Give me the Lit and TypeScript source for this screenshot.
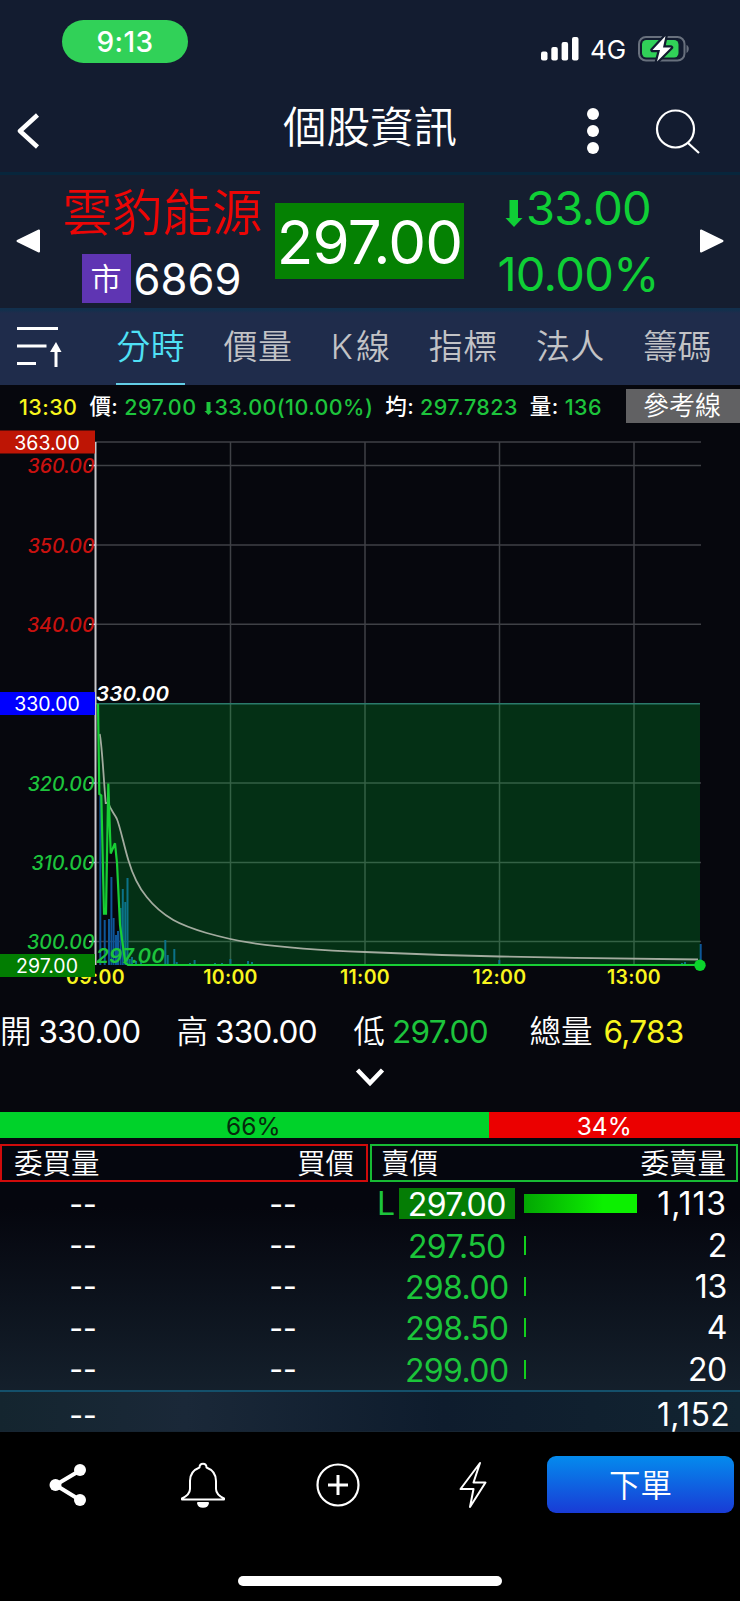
import { LitElement, html, css, svg } from "lit";
import { customElement } from "lit/decorators.js";

const CJK = css`Inter, "Noto Sans CJK TC", sans-serif`;

@customElement("price-chart")
class PriceChart extends LitElement {
  static styles = css`
    :host { display: block; height: 575px; }
    svg { display: block; font-family: ${CJK}; }
    .grid { stroke: #3f4146; stroke-width: 1.5; }
    .box { font-size: 19.5px; font-weight: 380; fill: #fff; letter-spacing: 0; text-anchor: middle; }
    .tick { font-size: 19.5px; font-style: italic; font-weight: 550; text-anchor: end; letter-spacing: 0; }
    .up { fill: #c9110f; }
    .down { fill: #1dc43c; }
    .flag { font-size: 20.5px; font-style: italic; font-weight: 600; letter-spacing: .2px; }
    .time { font-size: 19.5px; font-weight: 600; fill: #f8f51d; text-anchor: middle; letter-spacing: .3px; }
    .vol { stroke: #0e5698; stroke-width: 2; }
  `;
  render() {
    const levels: [number, number][] = [[360, 465.5], [350, 545], [340, 624.3], [320, 783], [310, 862.5], [300, 941.5]];
    const hours: [string, number][] = [["09:00", 95.5], ["10:00", 230.5], ["11:00", 365], ["12:00", 499.5], ["13:00", 634]];
    const vols: [number, number][] = [[100.3, 796], [104.7, 920], [109, 919], [111.4, 877], [113.6, 918], [116, 935], [118, 931], [120.6, 908], [122.8, 889], [125.3, 902], [127.5, 878], [129.7, 959], [132, 957], [136, 961], [141, 961], [165.3, 940], [167.7, 955], [174.3, 949], [176.7, 962], [190, 963], [194.6, 960], [215, 963], [222, 963], [230.4, 959], [248, 961], [252, 962], [499.3, 960], [682, 963], [685, 962], [700.7, 944]];
    const price = "98,704 99.3,794 101.3,795.5 104,913.7 106,913.7 108.3,783.6 110.7,853.5 115,843.3 117,863 120,925 125.3,963 128,965 700,965";
    return html`<svg width="740" height="575" viewBox="0 425 740 575">
      <g class="grid">
        <path d="M95 442H701" />
        ${levels.map(([, y]) => svg`<path d="M95 ${y}H701"/>`)}
        ${hours.slice(1).map(([, x]) => svg`<path d="M${x} 442V965"/>`)}
      </g>
      <g class="vol">${vols.map(([x, y]) => svg`<path d="M${x} ${y}V965"/>`)}</g>
      <polygon points="98,703.7 ${price} 700,703.7" fill="#00ff40" fill-opacity=".17" />
      <path d="M95 703.7H700" stroke="#2b7a6b" stroke-width="1.5" />
      <path d="M95.5 442V965" stroke="#c8c8cc" stroke-width="2" />
      <path d="M99.7 734 C102 745 103 770 105.7 803 L108.3 803 C110.500 810 114 813 116.700 818.500 C120 826 124 846 128.300 860 C133 876 140 889 146.700 897 C153 905 163 914 173.300 920 C183 925.500 195 929.500 206.700 933 C221 937 235 940.500 250 942.700 C285 948 325 950.500 365 952 C410 954 455 955.500 500 956.500 C565 958 640 958.700 698 959.500" fill="none" stroke="#a3ab9f" stroke-width="1.8" />
      <polyline points=${price} fill="none" stroke="#18cf35" stroke-width="2.2" />
      <circle cx="700" cy="965.3" r="5.7" fill="#0bd42c" />
      ${levels.map(([v, y]) => svg`<path d="M89 ${y}h6" stroke="#ddd" stroke-width="1.5"/><text class="tick ${v > 330 ? "up" : "down"}" x="94.5" y=${y + 7.5}>${v.toFixed(2)}</text>`)}
      <text class="flag" x="96" y="701" fill="#fff">330.00</text>
      <text class="tick flag down" x="165" y="963">297.00</text>
      ${hours.map(([t, x]) => svg`<text class="time" x=${x} y="984.2">${t}</text>`)}
      <rect y="430.500" width="95" height="23" fill="#be1505" />
      <rect y="692" width="95" height="23" fill="#0000fe" />
      <rect y="954" width="95" height="23" fill="#027d02" />
      <text class="box" x="47" y="449.500">363.00</text>
      <text class="box" x="47" y="711">330.00</text>
      <text class="box" x="47" y="973">297.00</text>
    </svg>`;
  }
}

@customElement("order-book")
class OrderBook extends LitElement {
  static styles = css`
    :host { display: block; color: #fff; font-family: ${CJK}; font-weight: 380; }
    .ratio { display: flex; height: 26px; line-height: 29px; font-size: 24.5px; text-align: center; margin-bottom: 6px; }
    .b { width: 488.500px; background: #00d22a; color: #062a0c; box-sizing: border-box; padding-left: 18px; }
    .s { flex: 1; background: #eb0000; box-sizing: border-box; padding-right: 20px; }
    .heads { display: flex; gap: 2px; height: 38px; font-size: 28.5px; font-weight: 350; line-height: 36px; }
    .head { width: 368px; box-sizing: border-box; border: 2px solid #d00b0b; padding: 0 12px; display: flex; justify-content: space-between; }
    .head.g { border-color: #17b934; padding: 0 10px 0 9px; }
    .rows { padding-top: 1px; height: 208px; box-sizing: border-box; }
    .row { display: grid; grid-template-columns: 166px 232.500px 116.500px 9px minmax(0, 1fr) 110px; height: 41.4px; align-items: center; font-size: 32px; line-height: 40px; }
    .row > * { min-width: 0; }
    .dash { text-align: center; font-size: 30px; font-weight: 400; }
    .second { display: flex; align-items: center; }
    .second .dash { width: 234px; flex: none; }
    .low { color: #1dc43c; width: 20px; margin-left: -23px; flex: none; }
    .price { text-align: center; color: #1bc53a; height: 31px; line-height: 33px; letter-spacing: -.6px; }
    .price.hit { background: #057d05; color: #fff; }
    .bar { height: 19px; background: #12d01c; }
    .bar.big { background: linear-gradient(90deg, #03a603, #0cf000 70%); }
    .qty { text-align: right; padding-right: 13px; padding-top: 1px; letter-spacing: -.3px; }
    .long { letter-spacing: .9px; }
    .total { border-top: 2px solid #14506b; display: flex; justify-content: space-between; height: 41px; box-sizing: border-box; font-size: 32px; line-height: 46px; background: linear-gradient(90deg, #14252f, #1a2838 25%, #0e1c2d 60%, #122431); }
    .total .dash { width: 166px; }
    .total .qty { padding-top: 0; padding-right: 10px; letter-spacing: .3px; }
  `;
  render() {
    const asks: [string, string, number][] = [["297.00", "1,113", 113], ["297.50", "2", 2], ["298.00", "13", 2], ["298.50", "4", 2], ["299.00", "20", 2]];
    return html`
      <div class="ratio"><div class="b">66%</div><div class="s">34%</div></div>
      <div class="heads">
        <div class="head"><span>委買量</span><span>買價</span></div>
        <div class="head g"><span>賣價</span><span>委賣量</span></div>
      </div>
      <div class="rows">
        ${asks.map(([p, q, w], i) => html`<div class="row">
          <span class="dash">--</span>
          <div class="second"><span class="dash">--</span>${i === 0 ? html`<span class="low">L</span>` : ""}</div>
          <div class="price ${i === 0 ? "hit" : ""}">${p}</div><span></span>
          <div class="bar ${i === 0 ? "big" : ""}" style="width:${w}px"></div>
          <span class="qty ${q.length > 3 ? "long" : ""}">${q}</span>
        </div>`)}
      </div>
      <div class="total"><span class="dash">--</span><span class="qty">1,152</span></div>`;
  }
}

@customElement("app-root")
class AppRoot extends LitElement {
  static styles = css`
    :host { display: block; width: 740px; height: 1601px; overflow: hidden; background: #06070d; color: #fff; font-family: ${CJK}; font-weight: 350; }
    * { box-sizing: border-box; }
    svg { display: block; flex: none; }
    .status { height: 88px; background: #131c30; display: flex; justify-content: space-between; padding: 20px 50px 0 62px; }
    .clock { width: 126px; height: 43px; border-radius: 22px; background: #31d158; text-align: center; font-size: 28px; line-height: 45px; font-weight: 450; letter-spacing: .4px; }
    .sys { display: flex; height: 29px; margin-top: 14px; font-size: 26px; font-weight: 400; line-height: 34px; align-items: center; }
    .net { margin: 0 12px 0 11px; width: 36px; letter-spacing: 0; white-space: nowrap; padding-top: 2px; }
    .nav { height: 87px; background: #131c30; border-bottom: 3px solid #07263c; display: flex; align-items: center; padding: 2px 39px 0 17px; }
    .title { flex: 1; text-align: center; font-size: 43.5px; line-height: 60px; padding: 0 0 8px 113px; }
    .tools { display: flex; gap: 56px; align-items: center; }
    .quote { height: 133px; background: #151e30; display: flex; align-items: center; padding: 0 15px 2px 16px; font-weight: 380; }
    .stock { width: 195px; margin-left: 25px; display: flex; flex-direction: column; align-items: center; height: 131px; padding-top: 10px; }
    .name { color: #ec0606; font-size: 50px; line-height: 56px; white-space: nowrap; font-weight: 350; }
    .code { display: flex; gap: 3px; margin: 13px 2px 0 0; font-size: 43.5px; line-height: 44px; height: 49px; letter-spacing: 0; align-items: center; }
    .mkt { width: 49px; height: 49px; background: #5f35b3; font-size: 31px; line-height: 49px; text-align: center; font-weight: 350; }
    .last { width: 189px; height: 76px; background: #058103; font-size: 60px; line-height: 79px; text-align: center; letter-spacing: -.8px; margin-left: 15px; }
    .chg { width: 186px; margin-left: 21px; text-align: center; font-size: 47px; line-height: 66px; color: #0fcf36; letter-spacing: -.7px; margin-right: 29px; }
    .chg div { display: flex; justify-content: center; align-items: center; height: 66px; }
    .tabs { height: 77px; background: linear-gradient(#12304d 0 2px, #1f2c4b 5px); display: flex; align-items: center; padding: 0 28px 0 17px; justify-content: space-between; font-size: 34px; color: #c2c3c6; letter-spacing: .4px; }
    .tab { height: 77px; line-height: 78px; border-bottom: 2px solid transparent; }
    .tab.on { color: #4fe0f5; border-color: #63cde6; margin-left: 16px; }
    .tab span { margin-right: 3px; }
    .info { height: 40px; display: flex; align-items: center; padding: 1px 0 0 19px; font-size: 21.5px; font-weight: 500; letter-spacing: .42px; color: #1dc43c; white-space: pre; }
    .info > span, .info > b { line-height: 30px; height: 28px; }
    .info b { font-weight: 500; }
    .y { color: #f8f51d; }
    .info .w { color: #fff; margin: 0 6px 0 12px; line-height: 28px; }
    .info .refline { margin: 0 0 0 auto; width: 114px; height: 34px; background: #616163; color: #fff; font-size: 26px; font-weight: 350; line-height: 34px; text-align: center; letter-spacing: 0; padding-right: 2px; }
    .stats { height: 60px; display: grid; grid-template-columns: 176.500px 177px 176px 1fr; font-size: 31.5px; line-height: 64px; letter-spacing: -.7px; white-space: nowrap; font-weight: 380; }
    .stats i { font-style: normal; margin-right: 7px; letter-spacing: 0; font-weight: 350; }
    .stats i.sum { margin-right: 11px; }
    .g { color: #1dc43c; }
    .more { height: 52px; display: flex; justify-content: center; padding-top: 8px; }
    .book { height: 320px; background: linear-gradient(180deg, #05060e 30%, #172532 100%); }
    .foot { height: 169px; background: #000; display: flex; flex-direction: column; align-items: center; }
    .acts { width: 740px; height: 105px; display: flex; align-items: center; padding: 0 6px 0 0; }
    .slot { width: 135px; display: flex; justify-content: center; }
    .buy { margin-left: auto; width: 187px; height: 57px; border-radius: 9px; background: linear-gradient(#048bed, #193bd6); text-align: center; font-size: 31.500px; line-height: 59px; }
    .home { width: 264px; height: 10px; border-radius: 5px; background: #fff; margin-top: 39px; }
  `;
  render() {
    return html`
      <div class="status">
        <div class="clock">9:13</div>
        <div class="sys">
          <svg width="38" height="26" viewBox="0 0 38 26" fill="#fff"><rect x="0" y="15.500" width="6.500" height="9" rx="2"/><rect x="10.300" y="11" width="6.500" height="13.500" rx="2"/><rect x="20.600" y="6" width="6.500" height="18.500" rx="2"/><rect x="31" y="1" width="6.500" height="23.500" rx="2"/></svg>
          <span class="net">4G</span>
          <svg width="52" height="28" viewBox="0 0 52 28"><rect x="1" y="2" width="45.500" height="23.500" rx="7" fill="none" stroke="#68707d" stroke-width="2"/><rect x="4" y="5" width="36.500" height="17.500" rx="4.500" fill="#31d158"/><path d="M48.500 10c3 1 3 6.500 0 8z" fill="#68707d"/><path d="M27.500 1 14.500 15h7.500L19 26.500 33 12.500h-8z" fill="#fff" stroke="#131c30" stroke-width="4.500" paint-order="stroke" stroke-linejoin="round"/></svg>
        </div>
      </div>
      <div class="nav">
        <svg width="23" height="38" viewBox="0 0 23 38"><path d="M20.500 3 3 19l17.500 16" fill="none" stroke="#fff" stroke-width="4.500" stroke-linejoin="round"/></svg>
        <div class="title">個股資訊</div>
        <div class="tools">
          <svg width="12" height="48" viewBox="0 0 12 48" fill="#fff"><circle cx="6" cy="7" r="6"/><circle cx="6" cy="24" r="6"/><circle cx="6" cy="41" r="6"/></svg>
          <svg width="46" height="48" viewBox="0 0 46 48" fill="none" stroke="#fff" stroke-width="2.200"><circle cx="20.500" cy="22" r="18.500"/><path d="M33 36 44 46"/></svg>
        </div>
      </div>
      <div class="quote">
        <svg width="24" height="24" viewBox="0 0 24 24" fill="#fff" stroke="#fff" stroke-width="2" stroke-linejoin="round"><path d="M1.500 12 23 1.500v21z"/></svg>
        <div class="stock"><div class="name">雲豹能源</div><div class="code"><span class="mkt">市</span><span>6869</span></div></div>
        <div class="last">297.00</div>
        <div class="chg"><div><svg width="21" height="46" viewBox="0 0 21 46" fill="#0fcf36"><path d="M4.500 15h8.500v18h4.500L9 42 .5 33h4z"/></svg>33.00</div><div>10.00%</div></div>
        <svg width="24" height="24" viewBox="0 0 24 24" fill="#fff" stroke="#fff" stroke-width="2" stroke-linejoin="round"><path d="M22.500 12 1 1.500v21z"/></svg>
      </div>
      <div class="tabs">
        <svg width="45" height="42" viewBox="0 0 45 42"><path d="M0 2.500h41M0 20h29.500M0 37.500h19M39 41V22" stroke="#fff" stroke-width="3"/><path d="M39 16 33 26h11.500z" fill="#fff"/></svg>
        <span class="tab on">分時</span><span class="tab">價量</span><span class="tab"><span>K</span>線</span><span class="tab">指標</span><span class="tab">法人</span><span class="tab">籌碼</span>
      </div>
      <div class="info"><span class="y">13:30</span><span class="w">價:</span><b>297.00</b><svg width="18" height="20" viewBox="0 0 18 20" fill="#1dc43c"><path d="M10.500 6h4v9h2L12.500 19 8.500 15h2z"/></svg><b>33.00(10.00%)</b><span class="w">均:</span><b>297.7823</b><span class="w">量:</span><b>136</b><span class="refline">參考線</span></div>
      <price-chart></price-chart>
      <div class="stats"><span><i>開</i>330.00</span><span><i>高</i>330.00</span><span><i>低</i><span class="g">297.00</span></span><span><i class="sum">總量</i><span class="y">6,783</span></span></div>
      <div class="more"><svg width="30" height="20" viewBox="0 0 30 20"><path d="M2.500 2 15 15 27.500 2" fill="none" stroke="#fff" stroke-width="4.500"/></svg></div>
      <order-book class="book"></order-book>
      <div class="foot">
        <div class="acts">
          <span class="slot"><svg width="38" height="44" viewBox="0 0 38 44" fill="#fff"><path d="M31 7.500 6.500 22 31 37" fill="none" stroke="#fff" stroke-width="4"/><circle cx="31" cy="7" r="6"/><circle cx="6.500" cy="22" r="6"/><circle cx="31" cy="37" r="6"/></svg></span>
          <span class="slot"><svg width="46" height="46" viewBox="0 0 46 46" fill="none" stroke="#fff" stroke-width="2" stroke-linejoin="round"><path d="M19.500 5.500C19.500 .5 26.500 .5 26.500 5.500 33 8 36 13 36 19V27C36 32 40 34.500 44 36.500V37.500H2V36.500C6 34.500 10 32 10 27V19C10 13 13 8 19.500 5.500Z"/><path d="M18 41h10c-1 5-9 5-10 0z" fill="#fff"/></svg></span>
          <span class="slot"><svg width="44" height="44" viewBox="0 0 44 44" fill="none" stroke="#fff" stroke-width="2.200"><circle cx="22" cy="22" r="20.500"/><path d="M12 22h20M22 12v20" stroke-width="3"/></svg></span>
          <span class="slot"><svg width="28" height="48" viewBox="0 0 28 48" fill="none" stroke="#fff" stroke-width="2" stroke-linejoin="round"><path d="M21 2 1.500 28h13L11 46 26.500 21.500H14.500z"/></svg></span>
          <div class="buy">下單</div>
        </div>
        <div class="home"></div>
      </div>`;
  }
}
